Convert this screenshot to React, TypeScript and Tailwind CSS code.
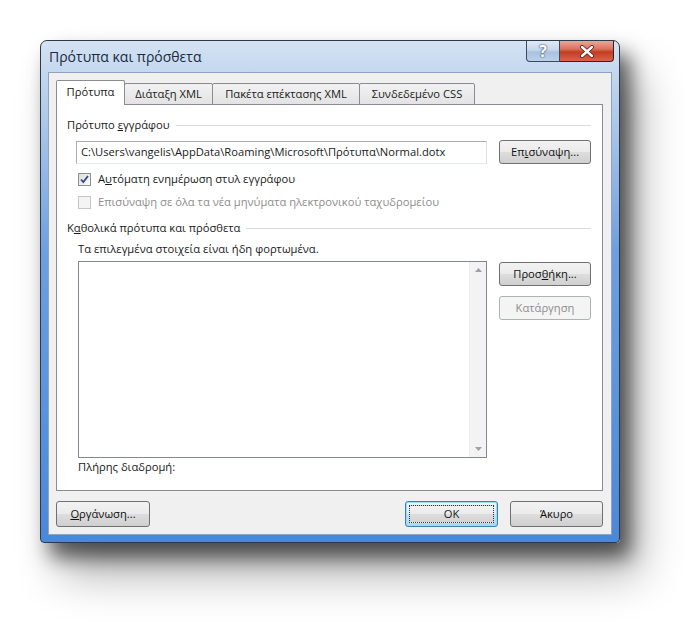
import React from "react";

const btn =
  "flex items-center justify-center rounded-[3px] border border-[#707070] bg-[linear-gradient(to_bottom,#f2f2f2_0%,#ebebeb_48%,#dddddd_52%,#cfcfcf_100%)] text-[#111]";

function Check() {
  return (
    <div className="w-[13px] h-[13px] border border-[#8e8f8f] bg-[linear-gradient(135deg,#dcdcdc,#fbfbfb)] flex items-center justify-center">
      <svg width="11" height="11" viewBox="0 0 11 11">
        <path d="M2 5.5 L4.3 8 L9 2" fill="none" stroke="#344a7d" strokeWidth="1.8" />
      </svg>
    </div>
  );
}

export default function App() {
  return (
    <div className="w-[699px] h-[622px] bg-white pl-[40px] pt-[40px] font-['Open_Sans','Noto_Sans',sans-serif] text-[11.2px] text-[#1a1a1a] overflow-hidden">
      <div className="w-[580px] h-[503px] rounded-t-[7px] rounded-b-[4px] border border-[#2d3949] bg-[linear-gradient(to_bottom,#d5e3f4_0%,#c4d8ef_6%,#a3c1e7_20%,#6e9fe0_42%,#4a88d8_100%)] shadow-[10px_14px_20px_rgba(0,0,0,0.6),20px_32px_45px_rgba(0,0,0,0.3)] flex flex-col px-[7px] pb-[7px]">
        {/* Title bar */}
        <div className="h-[31px] flex justify-between">
          <div className="pt-[6px] pl-[1px] text-[14px] text-[#1b2a3c] leading-[20px]">
            Πρότυπα και πρόσθετα
          </div>
          <div className="flex h-[21px] -mr-[2px]">
            <div className="w-[34px] h-[21px] border border-[#3b4a5e] border-t-0 rounded-bl-[4px] bg-[linear-gradient(to_bottom,#dfe9f5_0%,#c6d8ec_45%,#a9c2df_55%,#bcd0e8_100%)] flex items-center justify-center text-white text-[16px] font-bold [text-shadow:0_0_2px_#2e4560,0_0_1px_#2e4560]">
              ?
            </div>
            <div className="w-[54px] h-[21px] border border-[#3b1f1f] border-t-0 border-l-0 rounded-br-[4px] bg-[linear-gradient(to_bottom,#e9a898_0%,#d9735d_40%,#c23c22_55%,#d8654a_100%)] flex items-center justify-center">
              <svg width="16" height="13" viewBox="0 0 16 13">
                <path d="M3 2 L13 11 M13 2 L3 11" stroke="#5a1a10" strokeWidth="4" strokeLinecap="round" />
                <path d="M3 2 L13 11 M13 2 L3 11" stroke="#ffffff" strokeWidth="2.4" strokeLinecap="round" />
              </svg>
            </div>
          </div>
        </div>
        {/* Client */}
        <div className="flex-1 bg-[#f0f0f0] border border-[#8ea3bf] pl-[7px] pt-[7px] flex flex-col">
          {/* Tabs */}
          <div className="flex items-end h-[25px] relative z-10">
            <div className="w-[69px] h-[25px] bg-white border border-[#898c95] border-b-0 rounded-t-[2px] flex items-center justify-center pb-[1px]">
              Πρότυπα
            </div>
            <div className="w-[89px] h-[22px] -ml-px border border-[#898c95] rounded-t-[2px] bg-[linear-gradient(to_bottom,#f2f2f2,#e3e3e3)] flex items-center justify-center">
              Διάταξη XML
            </div>
            <div className="w-[148px] h-[22px] -ml-px border border-[#898c95] rounded-t-[2px] bg-[linear-gradient(to_bottom,#f2f2f2,#e3e3e3)] flex items-center justify-center">
              Πακέτα επέκτασης XML
            </div>
            <div className="w-[116px] h-[22px] -ml-px border border-[#898c95] rounded-t-[2px] bg-[linear-gradient(to_bottom,#f2f2f2,#e3e3e3)] flex items-center justify-center">
              Συνδεδεμένο CSS
            </div>
          </div>
          {/* Panel */}
          <div className="w-[547px] h-[387px] -mt-px bg-white border border-[#898c95] flex flex-col pl-[10px] pr-[11px]">
            <div className="flex items-center mt-[12px] h-[16px]">
              <span>
                Πρότυπο <u>ε</u>γγράφου
              </span>
              <div className="flex-1 ml-[6px] h-px bg-[#dcdcdc]" />
            </div>
            <div className="flex items-center mt-[7px] pl-[9px]">
              <div className="w-[412px] h-[23px] border border-[#abadb3] border-b-[#e3e9ef] border-r-[#dbdfe6] flex items-center pl-[4px] bg-white">
                C:\Users\vangelis\AppData\Roaming\Microsoft\Πρότυπα\Normal.dotx
              </div>
              <div className={`${btn} w-[92px] h-[24px] ml-[12px]`}>
                Επ<u>ι</u>σύναψη...
              </div>
            </div>
            <div className="flex items-center mt-[7px] pl-[11px] h-[16px]">
              <Check />
              <span className="ml-[7px]">
                Α<u>υ</u>τόματη ενημέρωση στυλ εγγράφου
              </span>
            </div>
            <div className="flex items-center mt-[7px] pl-[11px] h-[16px]">
              <div className="w-[13px] h-[13px] border border-[#c6c6c6] bg-[#f4f4f4]" />
              <span className="ml-[7px] text-[#8d8d8d]">
                Επισύναψη σε όλα τα νέα μηνύματα ηλεκτρονικού ταχυδρομείου
              </span>
            </div>
            <div className="flex items-center mt-[10px] h-[16px]">
              <span>
                Κ<u>α</u>θολικά πρότυπα και πρόσθετα
              </span>
              <div className="flex-1 ml-[6px] h-px bg-[#dcdcdc]" />
            </div>
            <div className="mt-[5px] pl-[11px] h-[16px] leading-[16px]">
              Τα επιλεγμένα στοιχεία είναι ήδη φορτωμένα.
            </div>
            <div className="flex mt-[4px] pl-[11px]">
              <div className="w-[410px] h-[197px] border border-[#828790] bg-white flex justify-end">
                <div className="w-[17px] h-full bg-[#f3f3f3] border-l border-[#ececec] flex flex-col justify-between items-center py-[6px]">
                  <svg width="7" height="4" viewBox="0 0 7 4">
                    <path d="M0 4 L3.5 0 L7 4 Z" fill="#a0a0a0" />
                  </svg>
                  <svg width="7" height="4" viewBox="0 0 7 4">
                    <path d="M0 0 L3.5 4 L7 0 Z" fill="#a0a0a0" />
                  </svg>
                </div>
              </div>
              <div className="flex flex-col ml-[12px] pt-px">
                <div className={`${btn} w-[92px] h-[24px]`}>
                  Προσ<u>θ</u>ήκη...
                </div>
                <div className="w-[92px] h-[24px] mt-[10px] rounded-[3px] border border-[#adb2b5] bg-[#f4f4f4] flex items-center justify-center text-[#8d8d8d]">
                  Κατάργηση
                </div>
              </div>
            </div>
            <div className="mt-[1px] pl-[11px] h-[16px] leading-[16px]">
              Πλήρης διαδρομή:
            </div>
          </div>
          {/* Bottom buttons */}
          <div className="flex items-center mt-[10px]">
            <div className={`${btn} w-[94px] h-[26px]`}>
              <span>
                <u>Ο</u>ργάνωση...
              </span>
            </div>
            <div className="w-[93px] h-[26px] ml-[255px] rounded-[3px] border border-[#3c7fb1] shadow-[inset_0_0_0_1px_#9fdcf1] bg-[linear-gradient(to_bottom,#eaf6fd_0%,#d9f0fc_48%,#bee6fd_52%,#a7d9f5_100%)] p-[3px]">
              <div className="w-full h-full border border-dotted border-[#333] flex items-center justify-center bg-[linear-gradient(to_bottom,#f2f2f2_0%,#ebebeb_48%,#dddddd_52%,#d4d4d4_100%)]">
                OK
              </div>
            </div>
            <div className={`${btn} w-[93px] h-[26px] ml-[12px]`}>Άκυρο</div>
          </div>
        </div>
      </div>
    </div>
  );
}
